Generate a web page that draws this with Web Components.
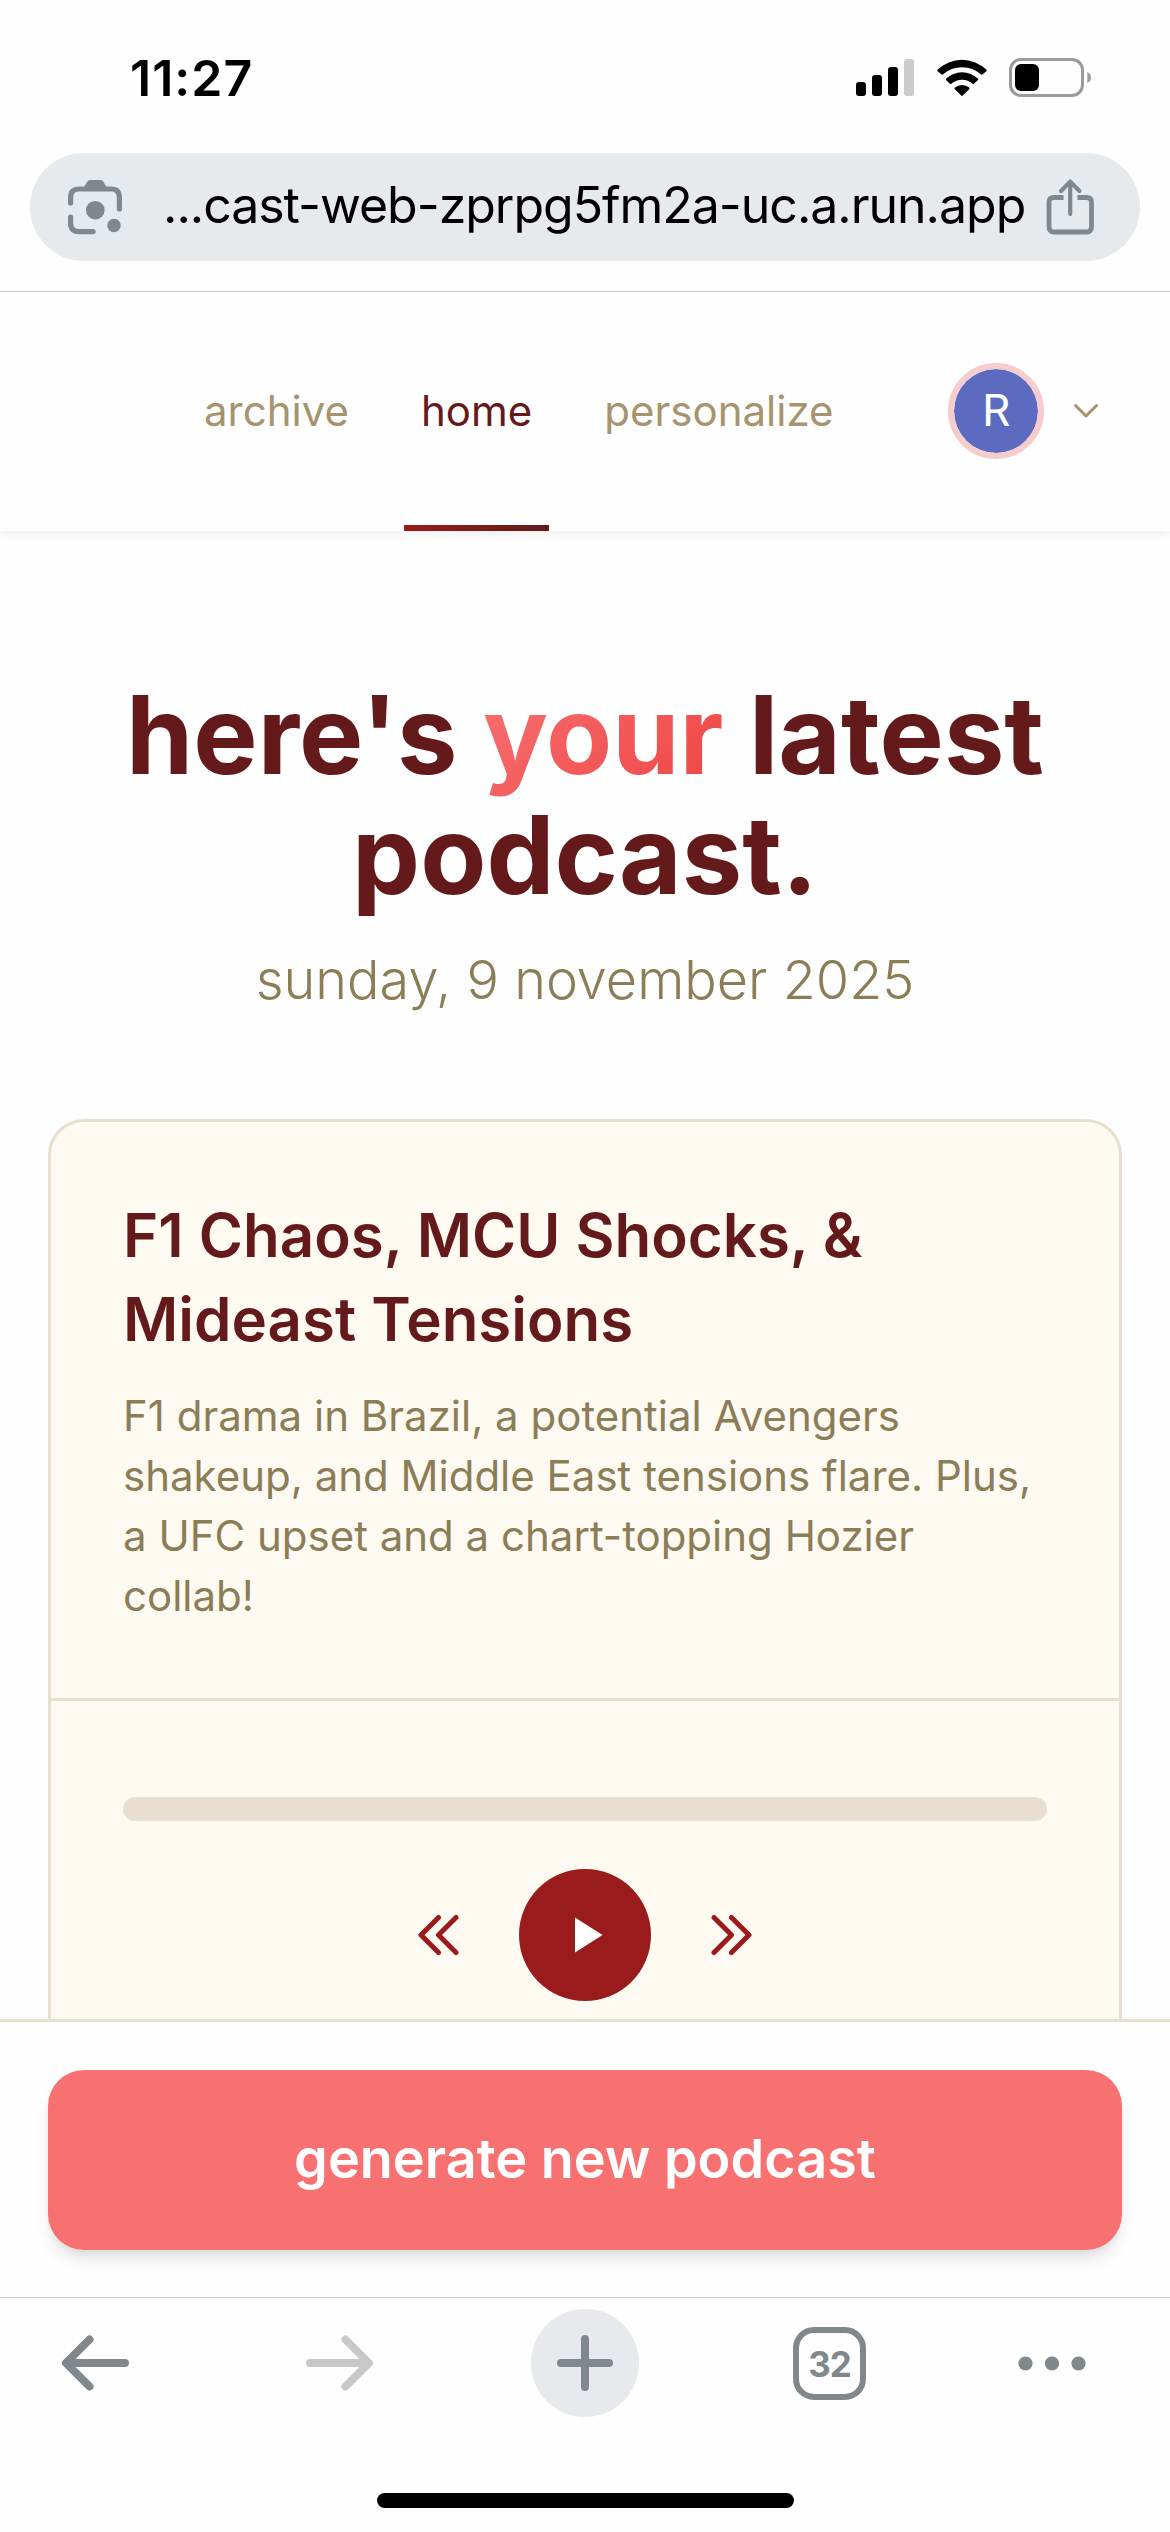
<!DOCTYPE html>
<html lang="en">
<head>
<meta charset="utf-8">
<title>podcast</title>
<style>
html,body{margin:0;padding:0}
body{width:1170px;height:2532px;overflow:hidden;background:#fff;font-family:Inter,"Liberation Sans",sans-serif}
</style>
</head>
<body>
<phone-screen></phone-screen>
<script>
const define = (name, html) => customElements.define(name, class extends HTMLElement {
  constructor() {
    super();
    const t = document.createElement('template');
    t.innerHTML = html;
    this.attachShadow({ mode: 'open' }).append(t.content.cloneNode(true));
  }
});

define('status-bar', `
<style>
:host{display:flex;justify-content:space-between;height:153px;box-sizing:border-box;padding:47px 78px 0 130px}
.time{font-size:50px;line-height:62px;font-weight:600;color:#000;letter-spacing:1px}
.icons{display:flex;gap:22px;padding-top:11px;height:40px}
svg{display:block}
</style>
<div class="time">11:27</div>
<div class="icons">
<svg width="59" height="40"><g fill="#000"><rect x="0" y="24" width="10" height="14" rx="3"/><rect x="16" y="17" width="10" height="21" rx="3"/><rect x="32" y="9" width="10" height="29" rx="3"/></g><rect x="48" y="1" width="10" height="37" rx="3" fill="#cbcbcb"/></svg>
<svg width="50" height="40" viewBox="0 0 50 40"><path d="M.5 11.8A35 35 0 0 1 49.500 11.800Q50 12.500 49.300 13.200L45.400 16.600Q44.800 17.100 44.200 16.600A28.500 28.500 0 0 0 5.800 16.600Q5.200 17.100 4.600 16.600L.7 13.200Q0 12.500 .5 11.800Z"/><path d="M9 20.700A23 23 0 0 1 41 20.700Q41.600 21.400 41 22L37 25.700Q36.400 26.200 35.700 25.700A16.500 16.500 0 0 0 14.300 25.700Q13.600 26.200 13 25.700L9 22Q8.400 21.400 9 20.700Z"/><path d="M17.800 29.600A11 11 0 0 1 32.200 29.600Q32.900 30.400 32.200 31.200L25.700 37.600Q25 38.300 24.300 37.600L17.800 31.200Q17.100 30.400 17.800 29.600Z"/></svg>
<svg width="83" height="40"><rect x="1.500" y="1.500" width="72" height="36" rx="10.500" fill="none" stroke="#9a9a9a" stroke-width="3"/><rect x="6" y="6" width="24" height="27" rx="6" fill="#000"/><path d="M78.300 14Q82 15.500 82 19.500T78.300 25Z" fill="#9a9a9a"/></svg>
</div>`);

define('address-bar', `
<style>
:host{display:block;height:139px;box-sizing:border-box;padding:0 30px;border-bottom:1px solid #c8c9ca}
.pill{display:flex;align-items:center;height:108px;border-radius:54px;background:#e6eaed;padding:0 45px 0 37px}
.url{flex:1;min-width:0;margin-left:40px;padding-bottom:4px;font-size:50px;line-height:62px;color:#000;white-space:nowrap;letter-spacing:-1.020px}
svg{display:block;flex:none}
</style>
<div class="pill">
<svg width="56" height="58" viewBox="0 0 56 58"><g fill="none" stroke="#80888b" stroke-width="5.200" stroke-linecap="round"><path d="M3.600 25V19.500Q3.600 11 12 11H44Q52.400 11 52.400 19.500V31"/><path d="M3.600 39V45Q3.600 53.600 12 53.600H26"/></g><g fill="#80888b"><path d="M16.500 10L20 4Q21 2 23 2H33.500Q35.500 2 36.500 4L40 10Z"/><circle cx="28.300" cy="32.200" r="9.300"/><circle cx="47" cy="47.500" r="6.700"/></g></svg>
<div class="url">...cast-web-zprpg5fm2a-uc.a.run.app</div>
<svg width="49" height="58" viewBox="0 0 49 58"><g fill="none" stroke="#80888b" stroke-linecap="round" stroke-linejoin="round"><path d="M17.500 19.500H8Q3 19.500 3 24.500V48.500Q3 54 8 54H40.500Q45.500 54 45.500 48.500V24.500Q45.500 19.500 40.500 19.500H31.500" stroke-width="4.800" stroke-linecap="butt"/><path d="M24.200 36V4M15 13L24.200 3.600L33.400 13" stroke-width="4.200"/></g></svg>
</div>`);

define('nav-link', `
<style>
:host{display:flex;flex-direction:column;justify-content:space-between;height:100%;color:#a6946e}
:host([active]){color:#641a1a}
.label{flex:1;display:flex;align-items:center;padding:0 18px 2px;font-size:42px}
.bar{height:6px;margin:-6px 1.500px 0 1px}
:host([active]) .bar{background:linear-gradient(90deg,#991b1b,#641a1a)}
</style>
<div class="label"><slot></slot></div><div class="bar"></div>`);

define('site-nav', `
<style>
:host{display:flex;position:relative;height:239px;background:#fefefe;padding:0 72px 0 186px;box-shadow:0 3px 9px rgba(0,0,0,.07)}
nav{display:flex;gap:36px;height:100%}
.user{display:flex;align-items:center;gap:30px;margin-left:auto;padding-bottom:1px}
.avatar{width:84px;height:84px;border:6px solid #f7cccd;border-radius:50%;background:#5c6bc0;background-clip:padding-box;color:#fff;font:45px/84px Roboto,sans-serif;text-align:center}
svg{display:block}
</style>
<nav><nav-link>archive</nav-link><nav-link active>home</nav-link><nav-link>personalize</nav-link></nav>
<div class="user"><div class="avatar">R</div>
<svg width="24" height="16" viewBox="0 0 24 16"><path d="M1.500 2.500L12 13L22.500 2.500" fill="none" stroke="#a6946e" stroke-width="3"  stroke-linecap="round" stroke-linejoin="round"/></svg></div>`);

define('page-heading', `
<style>
:host{display:block;padding-top:144px;text-align:center}
h1{margin:0;font-size:108px;line-height:120px;font-weight:700;color:#641a1a}
em{font-style:normal;background:linear-gradient(135deg,#f87171,#ef4444);-webkit-background-clip:text;background-clip:text;color:transparent}
p{margin:23px 0 0;font-size:54px;line-height:84px;font-weight:300;color:#8b7d56}
</style>
<h1>here's <em>your</em> latest<br>podcast.</h1>
<p>sunday, 9 november 2025</p>`);

define('audio-player', `
<style>
:host{display:block;padding:96px 72px 0}
.track{height:24px;border-radius:12px;background:#e8dfd0}
.controls{display:flex;justify-content:center;align-items:center;gap:60px;margin-top:48px}
.play{width:132px;height:132px;border-radius:50%;background:#991b1b}
svg{display:block}
</style>
<div class="track"></div>
<div class="controls">
<svg width="42" height="42" viewBox="0 0 42 42"><path d="M21.500 3.500L4 21L21.500 38.500M39 3.500L21.500 21L39 38.500" fill="none" stroke="#991b1b" stroke-width="5" stroke-linecap="round" stroke-linejoin="round"/></svg>
<svg class="play" viewBox="0 0 132 132"><path d="M56 48.500V83.500L83.500 66Z" fill="#fff"/></svg>
<svg width="42" height="42" viewBox="0 0 42 42"><path d="M3 3.500L20.500 21L3 38.500M20.500 3.500L38 21L20.500 38.500" fill="none" stroke="#991b1b" stroke-width="5" stroke-linecap="round" stroke-linejoin="round"/></svg>
</div>`);

define('podcast-card', `
<style>
:host{display:block;box-sizing:border-box;margin:97px 48px 0;height:1100px;border:3px solid #e9dfcf;border-radius:36px;background:#fef9f1}
.info{padding:71px 72px 72px;border-bottom:3px solid #e9dfcf}
h2{margin:0;font-size:60px;line-height:84px;font-weight:600;color:#641a1a}
p{margin:25px 0 0;font-size:42px;line-height:60px;color:#8b7d56;white-space:nowrap}
</style>
<div class="info"><h2>F1 Chaos, MCU Shocks, &amp;<br>Mideast Tensions</h2>
<p>F1 drama in Brazil, a potential Avengers<br>shakeup, and Middle East tensions flare. Plus,<br>a UFC upset and a chart-topping Hozier<br>collab!</p></div>
<audio-player></audio-player>`);

define('generate-bar', `
<style>
:host{display:block;position:relative;box-sizing:border-box;height:278px;padding:48px;border-top:3px solid #e9dfcf;background:#fefefe}
button{display:block;width:100%;height:180px;border:0;padding:0 0 2px;border-radius:36px;background:#f87171;color:#fff;font:600 54px/84px Inter,sans-serif;box-shadow:0 12px 18px -3px rgba(0,0,0,.1),0 6px 12px -6px rgba(0,0,0,.1)}
</style>
<button>generate new podcast</button>`);

define('browser-toolbar', `
<style>
:host{display:block;height:235px;box-sizing:border-box;border-top:1px solid #c8c9ca;background:#fefefe}
.row{display:flex;align-items:center;height:108px;padding:11px 0 0 61px}
.row>*{flex:none}
.row svg{display:block}
.forward{margin-left:177px}
.plus{width:108px;height:108px;border-radius:50%;background:#e8e9ed;margin-left:157px}
.tabs{box-sizing:border-box;width:73px;height:73px;margin-left:154px;border:6.500px solid #80888b;border-radius:21px;font-weight:700;font-size:35px;line-height:62px;text-align:center;color:#80888b;letter-spacing:-1px}
.more{margin-left:152px}
.home{width:417px;height:15px;border-radius:8px;background:#000;margin:76px auto 0}
</style>
<div class="row">
<svg width="68" height="56" viewBox="0 0 68 56"><path d="M64 28H6M28.500 4.500L5 28L28.500 51.500" fill="none" stroke="#80888b" stroke-width="8" stroke-linecap="round" stroke-linejoin="round"/></svg>
<svg class="forward" width="68" height="56" viewBox="0 0 68 56"><path d="M4 28H62M39.500 4.500L63 28L39.500 51.500" fill="none" stroke="#c8c8c8" stroke-width="8" stroke-linecap="round" stroke-linejoin="round"/></svg>
<svg class="plus" viewBox="0 0 108 108"><path d="M54 30V78M30 54H78" stroke="#80888b" stroke-width="8" stroke-linecap="round"/></svg>
<div class="tabs">32</div>
<svg class="more" width="68" height="16" fill="#80888b"><circle cx="7.500" cy="8.500" r="7.100"/><circle cx="34" cy="8.500" r="7.100"/><circle cx="60.500" cy="8.500" r="7.100"/></svg>
</div>
<div class="home"></div>`);

define('phone-screen', `
<style>
:host{display:flex;flex-direction:column;height:2532px;background:#fefefe}
main{height:1488px;overflow:hidden;background:linear-gradient(#fefefe,#fdfdfd)}
</style>
<status-bar></status-bar>
<address-bar></address-bar>
<site-nav></site-nav>
<main><page-heading></page-heading><podcast-card></podcast-card></main>
<generate-bar></generate-bar>
<browser-toolbar></browser-toolbar>`);
</script>
</body>
</html>
